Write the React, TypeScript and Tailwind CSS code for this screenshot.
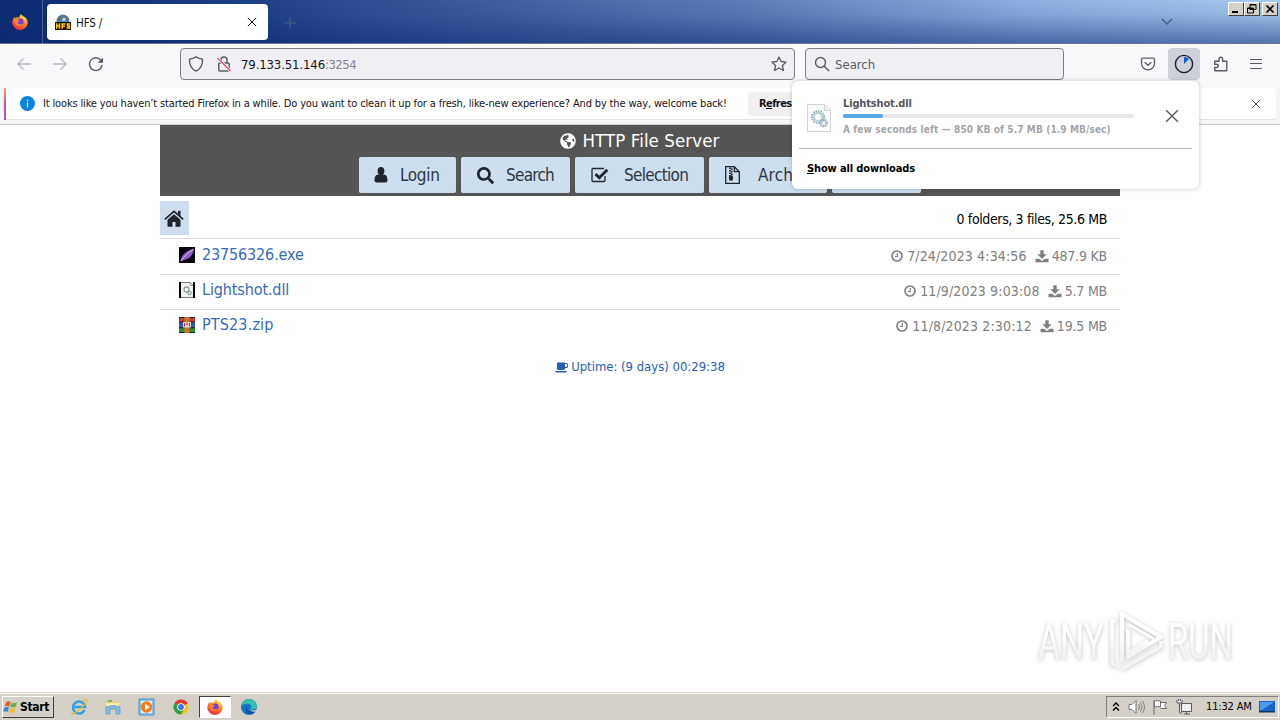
import React from "react";
import { FaSearch, FaGlobeAmericas } from "react-icons/fa";

type P = { className?: string };

const Firefox = ({ className = "" }: P) => (
  <svg viewBox="0 0 16 16" className={className}>
    <defs>
      <linearGradient id="ff" x1="0.8" y1="0" x2="0.3" y2="1">
        <stop offset="0" stopColor="#ffe14a" />
        <stop offset="0.45" stopColor="#ff8a1e" />
        <stop offset="1" stopColor="#f0244f" />
      </linearGradient>
    </defs>
    <path d="M1 5.5 2.4 3l1 1.2L5 3l1.5 1L9 0c1 2 3 2.4 4 3.3l1 .8c1.2 1.6 1.9 3.5 1.7 5.2A7.8 7.8 0 0 1 8 16 7.8 7.8 0 0 1 .2 8.500Z" fill="url(#ff)" />
    <circle cx="8.300" cy="7.800" r="3.300" fill="#7a3be0" />
    <path d="M2.500 5.500c2-.8 4 .2 5.500 1.400-1.500.3-2.500 1-2.400 2 .2 1.500 2.500 2 4.600.8C9 13 4 12.500 3 9Z" fill="#ff8420" />
    <path d="M9 1c.2 3 3.500 3.500 4 7 .8-1.500.5-3-.4-4.500C11 2.800 10 2.200 9 1Z" fill="#ffd83e" />
  </svg>
);

const Hfs = ({ className = "" }: P) => (
  <svg viewBox="0 0 16 16" className={className}>
    <circle cx="8" cy="7" r="6.500" fill="#4b86b8" />
    <path d="M3 3.500 6 1l2 2-2 3-3 2-1-2ZM10 2l3 1.500 1 4-3-1-2-2Z" fill="#66706a" />
    <path d="M8 4h3l-1 3H7Z" fill="#b9d7ea" />
    <rect y="8" width="16" height="8" fill="#1a1200" />
    <g stroke="#ffc61a" strokeWidth="1.500" fill="none">
      <path d="M1.700 9.300v5.400M4.500 9.300v5.400M1.700 12h3M7.200 14.700V10h3.300M7.200 12.300h2.800M15 10h-2.500V12h2v1.900h-3" />
    </g>
  </svg>
);

const Close = ({ className = "" }: P) => (
  <svg viewBox="0 0 12 12" className={className} fill="none" stroke="currentColor" strokeWidth="1.200">
    <path d="m1 1 10 10M11 1 1 11" />
  </svg>
);

const Arrow = ({ className = "" }: P) => (
  <svg viewBox="0 0 16 16" className={className} fill="none" stroke="currentColor" strokeWidth="1.300" strokeLinecap="round" strokeLinejoin="round">
    <path d="M14.500 8H1.800M7 3 1.800 8 7 13" />
  </svg>
);

const Reload = ({ className = "" }: P) => (
  <svg viewBox="0 0 16 16" className={className} fill="none" stroke="currentColor" strokeWidth="1.400" strokeLinecap="round">
    <path d="M12.800 4.200A6.300 6.300 0 1 0 14 9.500" />
    <path d="M15 1.500v5.300H9.700Z" fill="currentColor" stroke="none" />
  </svg>
);

const Shield = ({ className = "" }: P) => (
  <svg viewBox="0 0 16 16" className={className} fill="none" stroke="currentColor" strokeWidth="1.400" strokeLinejoin="round">
    <path d="M8 .9c2 1.300 4 2 6.500 2.200.3 5.200-1.500 9.600-6.500 12C3 12.700 1.200 8.300 1.500 3.100 4 2.900 6 2.200 8 .9Z" />
  </svg>
);

const Lock = ({ className = "" }: P) => (
  <svg viewBox="0 0 16 16" className={className} fill="none" stroke="currentColor" strokeWidth="1.500">
    <rect x="2.800" y="7" width="10.400" height="8" rx="1" />
    <path d="M5 7V4a3 3 0 0 1 6 0v3" />
    <path d="m1.500 2 13 13" stroke="#f9f9fb" strokeWidth="2.600" />
    <path d="m1.500 2 13 13" stroke="#e2405f" strokeWidth="1.300" />
  </svg>
);

const Star = ({ className = "" }: P) => (
  <svg viewBox="0 0 16 16" className={className} fill="none" stroke="currentColor" strokeWidth="1.300" strokeLinejoin="round">
    <path d="m8 1 2.100 4.500 5 .6-3.700 3.400 1 5L8 12l-4.400 2.500 1-5L.9 6.100l5-.6Z" />
  </svg>
);

const Lens = ({ className = "" }: P) => (
  <svg viewBox="0 0 16 16" className={className} fill="none" stroke="currentColor" strokeWidth="1.400" strokeLinecap="round">
    <circle cx="6.500" cy="6.500" r="5" />
    <path d="m10.200 10.200 4.600 4.600" />
  </svg>
);

const Pocket = ({ className = "" }: P) => (
  <svg viewBox="0 0 16 16" className={className} fill="none" stroke="currentColor" strokeWidth="1.300" strokeLinecap="round" strokeLinejoin="round">
    <path d="M2.700 2.200h10.600a1.200 1.200 0 0 1 1.200 1.200v4.100a6.500 6.300 0 0 1-13 0V3.400a1.200 1.200 0 0 1 1.200-1.200Z" />
    <path d="m5 6.500 3 2.800 3-2.800" />
  </svg>
);

const Puzzle = ({ className = "" }: P) => (
  <svg viewBox="0 0 16 16" className={className} fill="none" stroke="currentColor" strokeWidth="1.400" strokeLinejoin="round">
    <path d="M2.700 14.800V11.500h2a1.600 1.600 0 0 0 0-3.300h-2V5.200h4.300V3a1.800 1.800 0 0 1 3.600 0v2.200h4.200v9.600Z" />
  </svg>
);

const FileGear = ({ className = "" }: P) => (
  <svg viewBox="0 0 24 28" className={className} fill="none">
    <path d="M.5.500h17l6 6v21H.5Z" fill="#fbfbfb" stroke="#d2d5d5" />
    <path d="M17.500.500v6h6" fill="#eee" stroke="#d2d5d5" />
    <circle cx="11" cy="13" r="6" stroke="#93afb8" strokeWidth="2" strokeDasharray="1.500 1" />
    <circle cx="11" cy="13" r="4" stroke="#b8ced6" strokeWidth="1.800" />
    <circle cx="16.500" cy="19" r="3.300" stroke="#8eaab5" strokeWidth="2" strokeDasharray="1.500 .8" />
    <circle cx="16.500" cy="19" r="1.500" stroke="#c4d7dd" />
  </svg>
);

const Person = ({ className = "" }: P) => (
  <svg viewBox="0 0 14 16" className={className} fill="currentColor">
    <path d="M3.600 4a3.400 4 0 0 1 6.800 0c0 1.600-.6 3-1.400 3.700h1.800c1.700.5 2.700 2.300 2.700 5.300 0 1.700-.8 2.500-2.200 2.500H2.700C1.300 15.500.5 14.700.5 13c0-3 1-4.800 2.700-5.300H5C4.200 7 3.600 5.600 3.600 4Z" />
  </svg>
);

const Check = ({ className = "" }: P) => (
  <svg viewBox="0 0 18 16" className={className} fill="none" stroke="currentColor">
    <path d="M14 9v4.500a1 1 0 0 1-1 1H2a1 1 0 0 1-1-1V2.500a1 1 0 0 1 1-1h11" strokeWidth="1.300" />
    <path d="m4.500 7 3.800 3.800 8-8" strokeWidth="2.800" />
  </svg>
);

const Zip = ({ className = "" }: P) => (
  <svg viewBox="0 0 15 18" className={className} fill="none" stroke="currentColor" strokeWidth="1.300">
    <path d="M.7.700h8.600l5 5v11.600H.7ZM9.300.700v5h5" />
    <path d="M5.200 1.500v9" strokeWidth="2" strokeDasharray="1.500 1" />
    <path d="M6.800 2.500v8" strokeWidth="1.600" strokeDasharray="1.500 1" />
    <rect x="4.600" y="10" width="2.800" height="4" rx="1.200" fill="currentColor" />
  </svg>
);

const Home = ({ className = "" }: P) => (
  <svg viewBox="0 0 20 17" className={className} fill="currentColor">
    <path d="m10 4.300 6.500 5.500V16a.8.8 0 0 1-.8.8h-4.200V12h-3v4.800H4.300a.8.8 0 0 1-.8-.8V9.800Z" />
    <path d="m.8 9.300 9.200-8 9.200 8" fill="none" stroke="currentColor" strokeWidth="1.700" />
    <path d="M14 .8h2.500v6L14 4.500Z" />
  </svg>
);

const Clock = ({ className = "" }: P) => (
  <svg viewBox="0 0 12 12" className={className} fill="none" stroke="currentColor">
    <circle cx="6" cy="6" r="5" strokeWidth="1.700" />
    <path d="M6.300 3v3.500H3.700" strokeWidth="1.200" />
  </svg>
);

const Download = ({ className = "" }: P) => (
  <svg viewBox="0 0 14 13" className={className} fill="currentColor">
    <path d="M5.300.3h3.400v4h3L7 9 2.300 4.300h3ZM.5 8.700h3.700L7 11l2.800-2.300h3.700v3.500H.5Z" />
  </svg>
);

const Coffee = ({ className = "" }: P) => (
  <svg viewBox="0 0 13 11" className={className}>
    <path d="M2 .500h8v6a1.500 1.500 0 0 1-1.500 1.500h-5A1.500 1.500 0 0 1 2 6.500ZM0 9h12c-.3 1-1 1.500-2 1.500H2C1 10.500.3 10 0 9Z" fill="currentColor" />
    <path d="M10 1.500h1a1.700 1.700 0 0 1 0 3.800h-1" fill="none" stroke="currentColor" strokeWidth="1.200" />
  </svg>
);

const Feather = () => (
  <svg viewBox="0 0 16 16" className="size-4">
    <path d="M0 0h16v16H0Z" fill="#07030f" />
    <path d="M1.500 14.500C2 9 6 4 15 1.500 14.500 7 11 12 5 13Z" fill="#8b5fc4" />
    <path d="M2 14C5 9 9 6 14 2.500" stroke="#d9c0f2" fill="none" />
  </svg>
);

const Dll = () => (
  <svg viewBox="0 0 16 16" className="size-4">
    <path d="M0 0h16v16H0Z" fill="#050505" />
    <path d="M2 .5h9l3 3v12H2Z" fill="#f2f3f1" />
    <path d="M11 .500v3h3" fill="#ddd" stroke="#999" strokeWidth=".7" />
    <path d="M11 0h3v3Z" fill="#f2f3f1" />
    <circle cx="7.500" cy="7.500" r="2.500" fill="none" stroke="#88a09d" strokeWidth="1.300" />
    <circle cx="10.500" cy="11" r="1.700" fill="none" stroke="#88a09d" strokeWidth="1.200" />
  </svg>
);

const Rar = () => (
  <svg viewBox="0 0 16 16" className="size-4">
    <path d="M0 0h16v5H0Z" fill="#c23a31" />
    <path d="M0 5h16v6H0Z" fill="#3455b3" />
    <path d="M0 11h16v5H0Z" fill="#2f8d36" />
    <path d="M0 5h16M0 10.800h16M0 .5h16M0 15.500h16" stroke="#23201c" />
    <path d="M5.500 0h5v16h-5Z" fill="#c9762d" />
    <path d="M4 5h8v5.500H4Z" fill="#f2e3dc" />
    <path d="M5.500 6v3.500M8 5.500v3M10.500 6v3.500" stroke="#b8292c" strokeWidth="1.200" />
  </svg>
);

const files = [
  { icon: <Feather />, name: "23756326.exe", date: "7/24/2023 4:34:56", size: "487.9 KB", row: "h-[36px] pt-2 border-b", ls: "tracking-[-0.14px]" },
  { icon: <Dll />, name: "Lightshot.dll", date: "11/9/2023 9:03:08", size: "5.7 MB", row: "h-[35px] pt-[7px] border-b", ls: "tracking-[-0.12px]" },
  { icon: <Rar />, name: "PTS23.zip", date: "11/8/2023 2:30:12", size: "19.5 MB", row: "h-[35px] pt-[7px]", ls: "tracking-[0.15px]" },
];

const MenuButton = ({ w, icon, label, ls = "tracking-[-0.6px]" }: { w: string; icon?: React.ReactNode; label?: string; ls?: string }) => (
  <div className={`flex h-9 shrink-0 items-center rounded-[2px] bg-[#cddeef] text-[#20262c] ${w}`}>
    {icon}
    <span className={`pt-[2px] text-[17px] text-[#2f363e] ${ls}`}>{label}</span>
  </div>
);

const WinButton = ({ children }: { children: React.ReactNode }) => (
  <div className="h-[14px] w-4 border border-t-white border-r-[#404040] border-b-[#404040] border-l-white bg-[#d4d0c8]">
    <svg viewBox="0 0 14 12" className="h-3 w-[14px]" fill="none" stroke="#000">{children}</svg>
  </div>
);

const TitleBar = () => (
  <div className="flex h-[44px] shrink-0 border-b border-[#6a7590] bg-[linear-gradient(to_bottom,rgba(10,45,120,0)_0%,rgba(10,45,120,0.1)_35%,rgba(10,40,115,0.52)_100%),linear-gradient(to_right,#0c2b72_0%,#1b3d84_18%,#355698_33%,#5c7db8_58%,#8cb0e0_80%,#a6caf0_100%)]">
    <div className="flex w-[43px] shrink-0 items-start border-r border-[#4b629b] pt-[14px] pl-3">
      <Firefox className="size-4" />
    </div>
    <div className="mt-1 ml-1 flex h-9 w-[221px] shrink-0 items-center rounded bg-white pr-[11px] pl-2">
      <Hfs className="size-4" />
      <span className="ml-[5px] pt-[3px] text-[11.500px] tracking-[-0.15px]">HFS /</span>
      <Close className="ml-auto size-[10px] text-[#15141a]" />
    </div>
    <svg viewBox="0 0 12 12" className="mt-[17px] ml-4 size-3" stroke="#4d6180"><path d="M6 0v12M0 6h12" /></svg>
    <svg viewBox="0 0 12 8" className="mt-[18px] ml-auto h-2 w-3" fill="none" stroke="#46618f" strokeWidth="1.500"><path d="m1 1 5 5 5-5" /></svg>
    <div className="mt-[2px] mr-[2px] ml-[55px] flex">
      <WinButton><path d="M3 9h6" strokeWidth="2" /></WinButton>
      <WinButton><path d="M5 1.500h6v5H5zM5 2h6M2.500 5h6v5h-6zM2.500 5.500h6" fill="#d4d0c8" /></WinButton>
      <div className="w-[2px]" />
      <WinButton><path d="m3.500 2.500 7 7m0-7-7 7" strokeWidth="1.600" /></WinButton>
    </div>
  </div>
);

const Toolbar = () => (
  <div className="flex h-[44px] shrink-0 items-start bg-[#f9f9fb] pt-1 text-[#5b5b66]">
    <div className="flex h-8 w-[180px] items-center pl-4">
      <Arrow className="size-4 text-[#b8b8bf]" />
      <Arrow className="ml-5 size-4 rotate-180 text-[#b8b8bf]" />
      <Reload className="ml-5 size-4" />
    </div>
    <div className="flex h-8 w-[615px] items-center rounded border border-[#7c7c85] bg-[#f0f0f4] pr-[7px] pl-[7px]">
      <Shield className="size-4" />
      <Lock className="ml-3 size-4" />
      <span className="ml-[9px] pt-[2px] text-[13px] tracking-[-0.12px] text-[#15141a]">79.133.51.146<span className="tracking-[-0.5px] text-[#84848c]">:3254</span></span>
      <Star className="ml-auto size-4" />
    </div>
    <div className="ml-[10px] flex h-8 w-[259px] items-center rounded border border-[#7c7c85] bg-[#f0f0f4] pl-2">
      <Lens className="size-4" />
      <span className="ml-[5px] pt-[2px] text-[13px]">Search</span>
    </div>
    <Pocket className="mt-2 ml-[76px] size-4" />
    <div className="ml-3 flex size-8 items-center justify-center rounded bg-[#cdd0d8]">
      <svg viewBox="0 0 20 20" className="size-5"><circle cx="10" cy="10" r="8.600" fill="none" stroke="#20212c" strokeWidth="1.400" /><path d="M10 10V3a7 7 0 0 1 5 2Z" fill="#0060df" /></svg>
    </div>
    <Puzzle className="mt-2 ml-3 size-4" />
    <svg viewBox="0 0 12 12" className="mt-[10px] ml-[22px] size-3" stroke="currentColor" strokeWidth="1.200"><path d="M0 1.500h12M0 5.500h12M0 10.500h12" /></svg>
  </div>
);

const InfoBar = () => (
  <div className="h-[37px] shrink-0 border-b border-[#ccccce] bg-[#f6f6f7] px-1">
    <div className="flex h-8 items-center rounded-r border-b border-[#e2e2e4] bg-white">
      <div className="h-8 w-[2px] bg-linear-to-b from-[#ff9a6a] via-[#e04a9a] to-[#9059d8]" />
      <svg viewBox="0 0 16 16" className="ml-[14px] size-[15px]"><circle cx="8" cy="8" r="8" fill="#0a84e0" /><path d="M8 7v5M8 4v1.500" stroke="#fff" strokeWidth="1.300" /></svg>
      <span className="ml-[8px] w-[705px] pt-[2px] text-[11px] tracking-[-0.15px] whitespace-nowrap text-[#15141a]">It looks like you haven’t started Firefox in a while. Do you want to clean it up for a fresh, like-new experience? And by the way, welcome back!</span>
      <div className="flex h-6 w-[105px] items-center rounded bg-[#f0f0f1] pt-[2px] pl-[11px] text-[11px] font-bold tracking-[-0.6px] whitespace-nowrap">R<u>e</u>fresh Firefox…</div>
      <Close className="mr-[15px] ml-auto size-[10px] text-[#5b5b66]" />
    </div>
  </div>
);

const DownloadsPanel = () => (
  <div className="absolute top-[81px] left-[792px] flex h-[108px] w-[407px] flex-col rounded-md bg-white px-[7px] shadow-[0_0_4px_rgba(0,0,0,0.22)]">
    <div className="flex h-[68px] items-start border-b border-[#b4b4b8] pl-2">
      <FileGear className="mt-[23px] h-[28px] w-6" />
      <div className="mt-[15px] ml-[12px] w-[291px]">
        <div className="h-[15px] text-[11px] leading-[15px] font-bold tracking-[-0.15px] text-[#55555a]">Lightshot.dll</div>
        <div className="mt-[3px] h-1 rounded-full bg-[#e8e8e9]"><div className="h-1 w-10 rounded-full bg-[#5ba6e4]" /></div>
        <div className="mt-[4px] text-[10px] leading-[15px] font-bold tracking-[0.12px] whitespace-nowrap text-[#a5a5a8]">A few seconds left — 850 KB of 5.7 MB (1.9 MB/sec)</div>
      </div>
      <Close className="mt-[28px] ml-[31px] size-[14px] text-[#5b5b66]" />
    </div>
    <div className="flex h-[38px] items-center pt-[2px] pl-2 text-[11px] font-bold tracking-[-0.13px] text-black"><span><u>S</u>how all downloads</span></div>
  </div>
);

const Page = () => (
  <main className="mx-auto w-[960px] grow">
    <header className="h-[71px] bg-[#555]">
      <h1 className="flex h-8 items-center justify-center gap-[6px] pb-[1px] text-[18.500px] tracking-[0.1px] text-white"><FaGlobeAmericas className="size-4" />HTTP File Server</h1>
      <div className="flex gap-[5px] pl-[199px]">
        <MenuButton w="w-[97px]" icon={<Person className="mr-3 ml-[15px] h-4 w-[14px]" />} label="Login" ls="tracking-[-0.35px]" />
        <MenuButton w="w-[109px]" icon={<FaSearch className="mr-3 ml-4 size-[17px]" />} label="Search" ls="tracking-[-0.75px]" />
        <MenuButton w="w-[129px]" icon={<Check className="mr-[15px] ml-4 h-4 w-[18px]" />} label="Selection" ls="tracking-[-0.7px]" />
        <MenuButton w="w-[118px]" icon={<Zip className="mr-[18px] ml-4 h-[18px] w-[15px]" />} label="Archive" ls="tracking-[0.15px]" />
        <MenuButton w="w-[89px]" />
      </div>
    </header>
    <div className="flex h-[43px] items-start justify-between border-b border-[#ddd] pt-[5px] pr-[13px]">
      <div className="flex h-[34px] w-[29px] items-center justify-center bg-[#cddeef] pr-[1px] text-[#20262c]"><Home className="h-[17px] w-5" /></div>
      <span className="mt-[8px] text-[14px] leading-5 tracking-[-0.37px] text-black">0 folders, 3 files, 25.6 MB</span>
    </div>
    {files.map((f) => (
      <div key={f.name} className={`flex items-start border-[#ddd] pr-[13px] pl-[19px] ${f.row}`}>
        {f.icon}
        <span className={`-mt-1 ml-[7px] text-[16px] leading-6 text-[#356abb] ${f.ls}`}>{f.name}</span>
        <div className="-mt-px ml-auto flex items-center text-[14px] leading-5 text-[#808080]">
          <Clock className="mr-1 size-3" /><span className="tracking-[0.14px]">{f.date}</span>
          <Download className="mr-[3px] ml-2 h-[13px] w-[14px]" /><span className="tracking-[-0.2px]">{f.size}</span>
        </div>
      </div>
    ))}
    <footer className="mt-[12px] flex h-5 items-center justify-center gap-[3px] text-[13px] tracking-[-0.02px] text-[#2a5db0]"><Coffee className="h-[11px] w-[13px]" />Uptime: (9 days) 00:29:38</footer>
  </main>
);

const Watermark = () => (
  <div className="absolute top-[604px] left-[1030px]">
    <svg viewBox="0 0 210 74" className="h-[74px] w-[210px] overflow-visible drop-shadow-[0_1px_2px_rgba(0,0,0,0.24)]" fill="none">
      <defs>
        <linearGradient id="wm" gradientUnits="userSpaceOnUse" x1="0" y1="34" x2="0" y2="46">
          <stop offset="0" stopColor="#fff" />
          <stop offset="1" stopColor="#f3f3f3" />
        </linearGradient>
      </defs>
      <g fill="url(#wm)" fontFamily="Roboto, sans-serif" fontSize="50">
        <text x="8" y="55" textLength="66" lengthAdjust="spacingAndGlyphs">ANY</text>
        <text x="138" y="55" textLength="65" lengthAdjust="spacingAndGlyphs">RUN</text>
      </g>
      <path d="M92 58V10l39 23-35 21M98 26v23l20-11.500" stroke="url(#wm)" strokeWidth="4" strokeLinejoin="round" />
      <path d="M98 20l26 15" stroke="#fff" strokeWidth="2.500" />
      <path d="M86 17h-4v43l7 3M92 65l39-22v-6" stroke="url(#wm)" strokeWidth="3.500" strokeLinejoin="round" />
    </svg>
  </div>
);

const Taskbar = () => (
  <div className="flex h-7 shrink-0 items-center border-t border-[#d4d0c8] bg-[#d4d0c8] pr-[1px] pl-[2px] shadow-[inset_0_1px_0_#fff]">
    <div className="flex h-[22px] w-[52px] items-center border border-t-white border-r-[#404040] border-b-[#404040] border-l-white text-[12px] font-bold tracking-[-0.35px] text-black">
      <svg viewBox="0 0 18 16" className="mr-[1px] h-4 w-[16px] shrink-0"><path d="M3.500 3C5.500 1 7 1.500 8.500 2.500L7 7.500C5 6.300 3.500 6.500 2 7.500Z" fill="#e8562a" /><path d="M9.500 3c2 1.300 4 1 6.500-.5L14.500 7.500C12.500 9 10.500 9 8 7.800Z" fill="#72b43a" /><path d="M1.700 8.500c1.600-1 3.300-1 5-.1L5.300 13.500C3.500 12.500 1.800 12.500.2 13.500Z" fill="#3a86d6" /><path d="M7.700 9c2 1.200 4 1.200 6.500-.3L12.800 13.700c-2 1.500-4.200 1.500-6.600.3Z" fill="#f3c02b" /></svg>
      Start
    </div>
    <svg viewBox="0 0 18 18" className="ml-4 size-[18px]" fill="none"><path d="M14.500 12A6 6 0 1 1 15 9H4.500" stroke="#39a0df" strokeWidth="2.500" /><path d="M2 15C-1 19 9 13 14 7s3-6-2-4" stroke="#e8b93c" strokeWidth="1.200" /></svg>
    <svg viewBox="0 0 18 18" className="ml-4 size-[18px]"><path d="M1 3h5l1 1h8v8H1Z" fill="#e9cf70" /><path d="M2 5h13v4H2Z" fill="#f8ebb0" /><path d="M4 2h4v2H4Z" fill="#73b869" /><path d="M2 16V9q7-3 14 0v7h-4v-5H6v5Z" fill="#87bfe2" stroke="#5797c2" strokeWidth=".7" /></svg>
    <svg viewBox="0 0 18 18" className="ml-4 size-[18px]"><path d="M1 1h15v16H1Z" fill="#8cc3ec" stroke="#4e8fc0" /><path d="M3 3h11v12H3Z" fill="#e3f2fb" /><circle cx="8.500" cy="9" r="5.700" fill="#ef7c18" /><path d="m7 5.700 5 3.300-5 3.300Z" fill="#fff" /></svg>
    <svg viewBox="0 0 18 18" className="ml-4 size-[18px]"><circle cx="9" cy="9" r="7.500" fill="#fbc116" /><path d="M9 9 2.500 5.200a7.500 7.500 0 0 1 13 0Z" fill="#e33b2e" /><path d="M9 9 2.500 5.200A7.500 7.500 0 0 0 9 16.500l3-5Z" fill="#2da04c" /><path d="M5 2.500h8l2.500 3H9Z" fill="#e33b2e" /><circle cx="9" cy="9" r="3.800" fill="#fff" /><circle cx="9" cy="9" r="2.900" fill="#3b78e7" /></svg>
    <div className="ml-[9px] flex h-[22px] w-8 items-center justify-center border border-t-[#404040] border-r-white border-b-white border-l-[#404040] bg-white"><Firefox className="size-4" /></div>
    <svg viewBox="0 0 18 18" className="ml-[9px] size-[18px]"><circle cx="9" cy="9" r="8" fill="#1472c4" /><path d="M1.200 8C2-1 16-1 17 8c0 4-5 4-6 2 1-3-2-5-5-4-3 0-4.500 1.500-4.800 2Z" fill="#35bfae" /><path d="M7 8c-1 5 4 7.500 9 4.500-3 5-9 4.500-10 0C5.500 10 6 8.700 7 8Z" fill="#0c4f9f" /><path d="M9.500 9.500c2 4 5.500 3.500 8.500 1V13c-4 1.500-7.500 1-8.500-3.500Z" fill="#d4d0c8" /></svg>
    <div className="ml-auto flex h-[22px] w-[173px] items-center border border-t-[#808080] border-r-white border-b-white border-l-[#808080] pl-1">
      <svg viewBox="0 0 10 12" className="h-3 w-[10px]" fill="none" stroke="#000" strokeWidth="1.400"><path d="m2 5 3-3 3 3M2 9.500l3-3 3 3" /></svg>
      <svg viewBox="0 0 18 16" className="ml-[7px] h-4 w-[18px]" fill="#fff" stroke="#77777a"><path d="M1 5.500h3l4-4v13l-4-4H1Z" /><path d="M10.500 5q2 3 0 6M12.500 3.500q3 4.500 0 9M14.500 2q4 6 0 12" fill="none" strokeWidth=".9" /></svg>
      <svg viewBox="0 0 16 16" className="ml-[6px] size-4" fill="#fff" stroke="#6b6b6e"><path d="M2 1v15M2.500 2q3-1 6 0v6q-3-1-6 0ZM8.500 3.500h6l-2 3 2 3h-6" /></svg>
      <svg viewBox="0 0 17 16" className="ml-2 h-4 w-[17px]" fill="#efefef" stroke="#58585b"><path d="M5.500 4.500h10v8h-10ZM8 15h6M10.500 12.500V15M1 1v3h5V1M2.500 0v2M4.500 0v2M3.500 4.500V14h3" /></svg>
      <span className="ml-[13px] pt-[2px] text-[11px] tracking-[-0.15px] whitespace-nowrap text-black">11:32 AM</span>
      <svg viewBox="0 0 16 14" className="ml-[7px] h-[14px] w-4"><path d="M0 1h16v10H0Z" fill="#1763c4" /><path d="M1 2h14L3 10H1Z" fill="#4d9ae6" /><path d="M0 11h16v1.500H0Z" fill="#16365f" /></svg>
    </div>
  </div>
);

export default function App() {
  return (
    <div className="relative flex h-[720px] w-[1280px] flex-col overflow-hidden bg-white font-['DejaVu_Sans_Condensed','DejaVu_Sans',sans-serif] text-[#15141a]">
      <TitleBar />
      <Toolbar />
      <InfoBar />
      <Page />
      <Watermark />
      <Taskbar />
      <DownloadsPanel />
    </div>
  );
}
